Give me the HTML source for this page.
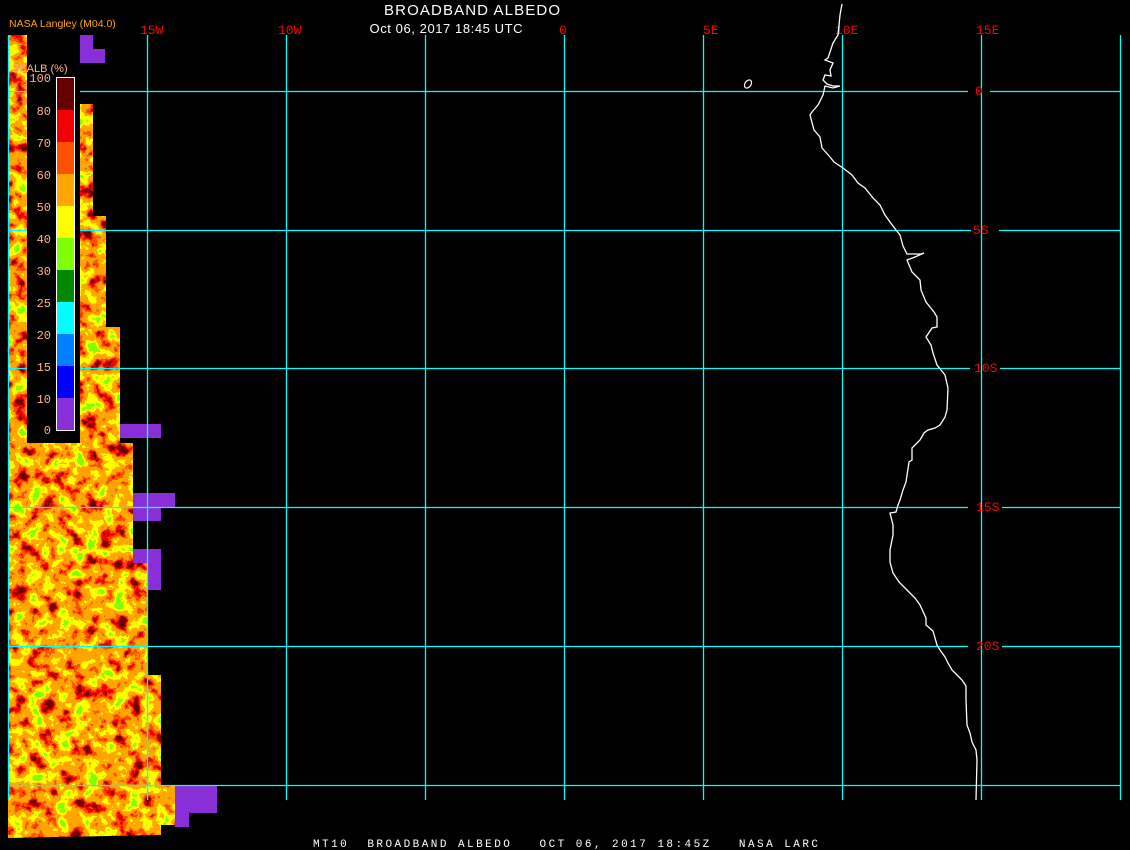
<!DOCTYPE html>
<html><head><meta charset="utf-8"><style>
html,body{margin:0;padding:0;background:#000;width:1130px;height:850px;overflow:hidden}
svg{display:block}
text{font-family:"Liberation Mono",monospace}
</style></head><body>
<svg width="1130" height="850" viewBox="0 0 1130 850" xmlns="http://www.w3.org/2000/svg">
<defs>
<filter id="n" x="0" y="0" width="100%" height="100%" color-interpolation-filters="sRGB">
<feTurbulence type="fractalNoise" baseFrequency="0.07" numOctaves="4" seed="7"/>
<feColorMatrix type="matrix" values="1.7 0 0 0 -0.35  1.7 0 0 0 -0.35  1.7 0 0 0 -0.35  0 0 0 0 1"/>
<feComponentTransfer>
<feFuncR type="discrete" tableValues="0.45 0.95 1 1 1 1 1 0.5"/>
<feFuncG type="discrete" tableValues="0 0 0.31 0.65 0.65 1 1 1"/>
<feFuncB type="discrete" tableValues="0 0 0 0 0 0 0 0"/>
<feFuncA type="discrete" tableValues="1"/>
</feComponentTransfer>
</filter>
<clipPath id="c"><polygon points="8,35 27,35 27,443 80,443 80,104 93,104 93,216 106,216 106,327 120,327 120,443 133,443 133,560 147,560 147,675 161,675 161,785 175,785 175,825 161,825 161,835 8,838"/></clipPath>
</defs>
<rect width="1130" height="850" fill="#000"/>
<g clip-path="url(#c)"><rect x="8" y="35" width="170" height="805" filter="url(#n)"/></g>
<g fill="#8a2ed8">
<rect x="80" y="35" width="13" height="28"/><rect x="93" y="49" width="12" height="14"/>
<rect x="120" y="424" width="41" height="14"/>
<rect x="133" y="493" width="42" height="14"/><rect x="133" y="507" width="28" height="14"/>
<rect x="133" y="549" width="28" height="14"/><rect x="147" y="563" width="14" height="27"/>
<rect x="175" y="785" width="42" height="28"/><rect x="175" y="813" width="14" height="14"/>
</g>
<g stroke="#00ffff" stroke-width="1.3" fill="none">
<line x1="8.5" y1="35" x2="8.5" y2="800"/>
<line x1="147.5" y1="35" x2="147.5" y2="800"/>
<line x1="286.5" y1="35" x2="286.5" y2="800"/>
<line x1="425.5" y1="35" x2="425.5" y2="800"/>
<line x1="564.5" y1="35" x2="564.5" y2="800"/>
<line x1="703.5" y1="35" x2="703.5" y2="800"/>
<line x1="842.5" y1="35" x2="842.5" y2="800"/>
<line x1="981.5" y1="35" x2="981.5" y2="800"/>
<line x1="1120.5" y1="35" x2="1120.5" y2="800"/>
<path d="M8 91.5H968M990 91.5H1120M8 230.5H971M999 230.5H1120M8 368.5H970M1000 368.5H1120M8 507.5H968M1002 507.5H1120M8 646.5H968M1002 646.5H1120M8 785.5H1120"/>
</g>
<rect x="27" y="62" width="53" height="381" fill="#000"/>
<g fill="#ff0000" font-size="13">
<text x="140" y="34">15W</text><text x="278" y="34">10W</text><text x="559" y="34">0</text>
<text x="703" y="34">5E</text><text x="835" y="34">10E</text><text x="976" y="34">15E</text>
<text x="975" y="95">0</text><text x="973" y="234">5S</text><text x="974" y="372">10S</text>
<text x="976" y="511">15S</text><text x="976" y="650">20S</text>
</g>
<polyline fill="none" stroke="#fff" stroke-width="1.3" points="842,4 840,15 838,35 833,43 828,58 825,60 833,63 830,70 831,76 825,75 823,80 827,84 833,86 840,86 833,88 825,86 823,95 818,105 812,112 810,115 814,130 820,137 822,148 830,157 834,162 843,168 852,175 858,183 865,188 873,198 880,205 885,215 890,222 896,230 900,235 903,246 907,254 921,254 924,253 915,257 907,260 912,272 920,280 921,290 926,302 934,312 937,317 937,327 932,328 926,337 931,345 933,353 937,365 945,375 948,388 947,410 945,417 940,425 935,428 928,430 924,433 920,440 916,444 912,448 912,460 909,462 906,482 903,490 900,500 898,505 896,512 890,513 893,525 893,535 890,550 890,562 893,573 899,582 907,590 915,598 920,605 926,618 926,625 933,631 937,645 940,650 945,657 948,663 952,670 958,676 962,680 966,686 966,700 967,725 970,733 972,742 976,750 977,760 976,800"/>
<ellipse cx="748" cy="84" rx="3" ry="4.5" transform="rotate(35 748 84)" fill="none" stroke="#fff" stroke-width="1.2"/>
<text x="9" y="27" fill="#ffa500" font-size="10.5" style="font-family:'Liberation Sans',sans-serif">NASA Langley (M04.0)</text>
<text x="12" y="72" fill="#ffb090" font-size="11" style="font-family:'Liberation Sans',sans-serif">BBALB (%)</text>
<g>
<rect x="57" y="78" width="17" height="32" fill="#640000"/>
<rect x="57" y="110" width="17" height="32" fill="#f00000"/>
<rect x="57" y="142" width="17" height="32" fill="#ff5000"/>
<rect x="57" y="174" width="17" height="32" fill="#ffa500"/>
<rect x="57" y="206" width="17" height="32" fill="#ffff00"/>
<rect x="57" y="238" width="17" height="32" fill="#80ff00"/>
<rect x="57" y="270" width="17" height="32" fill="#008800"/>
<rect x="57" y="302" width="17" height="32" fill="#00ffff"/>
<rect x="57" y="334" width="17" height="32" fill="#0080ff"/>
<rect x="57" y="366" width="17" height="32" fill="#0000ff"/>
<rect x="57" y="398" width="17" height="32" fill="#8a2ed8"/>
<rect x="56.5" y="77.5" width="18" height="353" fill="none" stroke="#fff" stroke-width="1"/>
</g>
<g fill="#ffb090" font-size="12" text-anchor="end" style="font-family:'Liberation Sans',sans-serif">
<text x="51" y="82">100</text><text x="51" y="115">80</text><text x="51" y="147">70</text>
<text x="51" y="179">60</text><text x="51" y="211">50</text><text x="51" y="243">40</text>
<text x="51" y="275">30</text><text x="51" y="307">25</text><text x="51" y="339">20</text>
<text x="51" y="371">15</text><text x="51" y="403">10</text><text x="51" y="434">0</text>
</g>
<text x="472" y="15" fill="#fff" font-size="15" textLength="176" text-anchor="middle" style="font-family:'Liberation Sans',sans-serif">BROADBAND ALBEDO</text>
<text x="446" y="33" fill="#fff" font-size="13" textLength="153" text-anchor="middle" style="font-family:'Liberation Sans',sans-serif">Oct 06, 2017 18:45 UTC</text>
<text x="313" y="847" fill="#fff" font-size="11" textLength="505" style="white-space:pre" xml:space="preserve">MT10  BROADBAND ALBEDO   OCT 06, 2017 18:45Z   NASA LARC</text>
</svg>
</body></html>
